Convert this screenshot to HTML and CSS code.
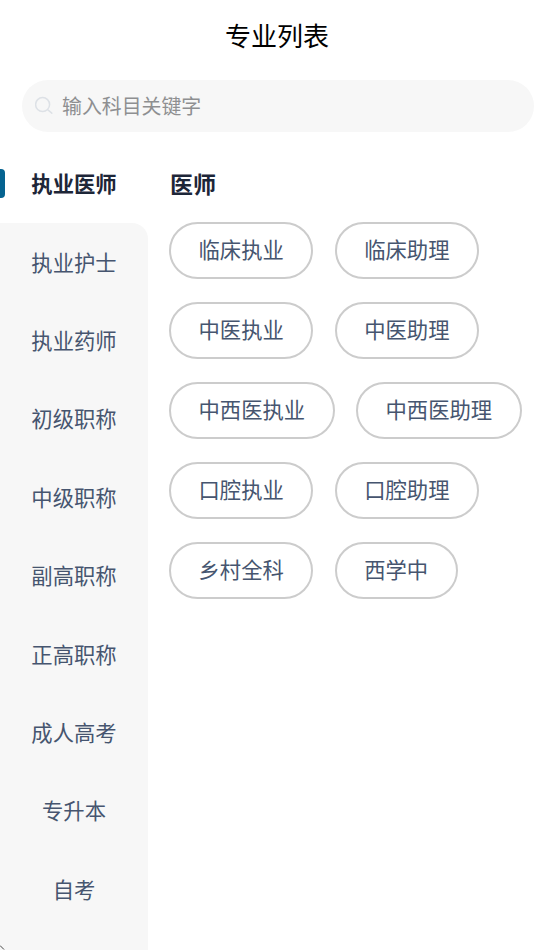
FILE: index.html
```html
<!DOCTYPE html>
<html lang="zh-CN">
<head>
  <meta charset="UTF-8">
  <meta name="viewport" content="width=device-width, initial-scale=1.0">
  <title>专业列表</title>
  <link rel="stylesheet" href="styles.css">
</head>
<body>
  <div class="page">
    <h1 class="title">专业列表</h1>
    <div class="search">
      <svg class="search-icon" width="20" height="20" viewBox="0 0 20 20" fill="none">
        <circle cx="7.6" cy="8.6" r="7" stroke="#dde1e6" stroke-width="1.5"/>
        <path d="M13.2 14.2l3.6 3" stroke="#dde1e6" stroke-width="1.5" stroke-linecap="round"/>
      </svg>
      <span class="search-text">输入科目关键字</span>
    </div>
    <div class="content">
      <!-- Left menu -->
      <div class="menu">
        <div class="menu-item active">执业医师</div>
        <div class="menu-rest">
          <div class="menu-item">执业护士</div>
          <div class="menu-item">执业药师</div>
          <div class="menu-item">初级职称</div>
          <div class="menu-item">中级职称</div>
          <div class="menu-item">副高职称</div>
          <div class="menu-item">正高职称</div>
          <div class="menu-item">成人高考</div>
          <div class="menu-item">专升本</div>
          <div class="menu-item">自考</div>
        </div>
      </div>
      <!-- Right list -->
      <div class="list">
        <h2 class="list-title">医师</h2>
        <div class="chips">
          <div class="chip">临床执业</div>
          <div class="chip">临床助理</div>
          <div class="chip">中医执业</div>
          <div class="chip">中医助理</div>
          <div class="chip">中西医执业</div>
          <div class="chip">中西医助理</div>
          <div class="chip">口腔执业</div>
          <div class="chip">口腔助理</div>
          <div class="chip">乡村全科</div>
          <div class="chip">西学中</div>
        </div>
      </div>
    </div>
  </div>
  <svg class="corner-mark" width="5" height="5" viewBox="0 0 5 5" fill="none">
    <path d="M0 0.5l4 4" stroke="#444" stroke-width="1"/>
  </svg>
</body>
</html>
```

FILE: styles.css
```css
* {
  box-sizing: border-box;
}

html,
body {
  margin: 0;
  padding: 0;
  height: 100%;
  overflow: hidden;
  background: #fff;
}

body {
  font-family: "Noto Sans CJK SC", "Noto Sans", sans-serif;
}

.page {
  height: 950px;
  display: flex;
  flex-direction: column;
}

.title {
  margin: 0;
  height: 70px;
  line-height: 70px;
  text-align: center;
  font-size: 26px;
  font-weight: 400;
  color: #000;
}

.search {
  margin: 10px 20px 0 22px;
  height: 52px;
  border-radius: 26px;
  background: #f7f7f7;
  display: flex;
  align-items: center;
  padding-left: 13px;
}

.search-icon {
  flex: none;
  margin-right: 7px;
}

.search-text {
  font-size: 19.9px;
  color: #8e8f91;
  padding-bottom: 2px;
}

.content {
  flex: 1;
  display: flex;
  margin-top: 13px;
  min-height: 0;
}

.menu {
  width: 148px;
  flex: none;
  display: flex;
  flex-direction: column;
}

.menu-rest {
  flex: 1;
  background: #f7f7f7;
  border-radius: 0 16px 0 0;
}

.menu-item {
  height: 78.4px;
  padding-bottom: 3px;
  display: flex;
  align-items: center;
  justify-content: center;
  font-size: 21.33px;
  color: #46556f;
}

.menu-item.active {
  position: relative;
  font-weight: 700;
  color: #1d2638;
}

.menu-item.active::before {
  content: "";
  position: absolute;
  left: -3px;
  top: 24px;
  width: 8px;
  height: 29px;
  border-radius: 4px;
  background: #056390;
}

.list {
  flex: 1;
  padding-left: 21px;
}

.list-title {
  margin: 0;
  height: 76px;
  padding-top: 22px;
  padding-left: 1px;
  font-size: 23px;
  line-height: 32px;
  font-weight: 700;
  color: #1d2638;
}

.chips {
  display: flex;
  flex-wrap: wrap;
  gap: 22.7px 21.33px;
  margin-top: 0.7px;
}

.chip {
  height: 57.3px;
  padding: 0 27.5px 3px;
  border: 2px solid #cccccc;
  border-radius: 29px;
  display: flex;
  align-items: center;
  font-size: 21.33px;
  color: #46556f;
  background: #fff;
}

.corner-mark {
  position: absolute;
  left: 0;
  bottom: 0;
}
```
